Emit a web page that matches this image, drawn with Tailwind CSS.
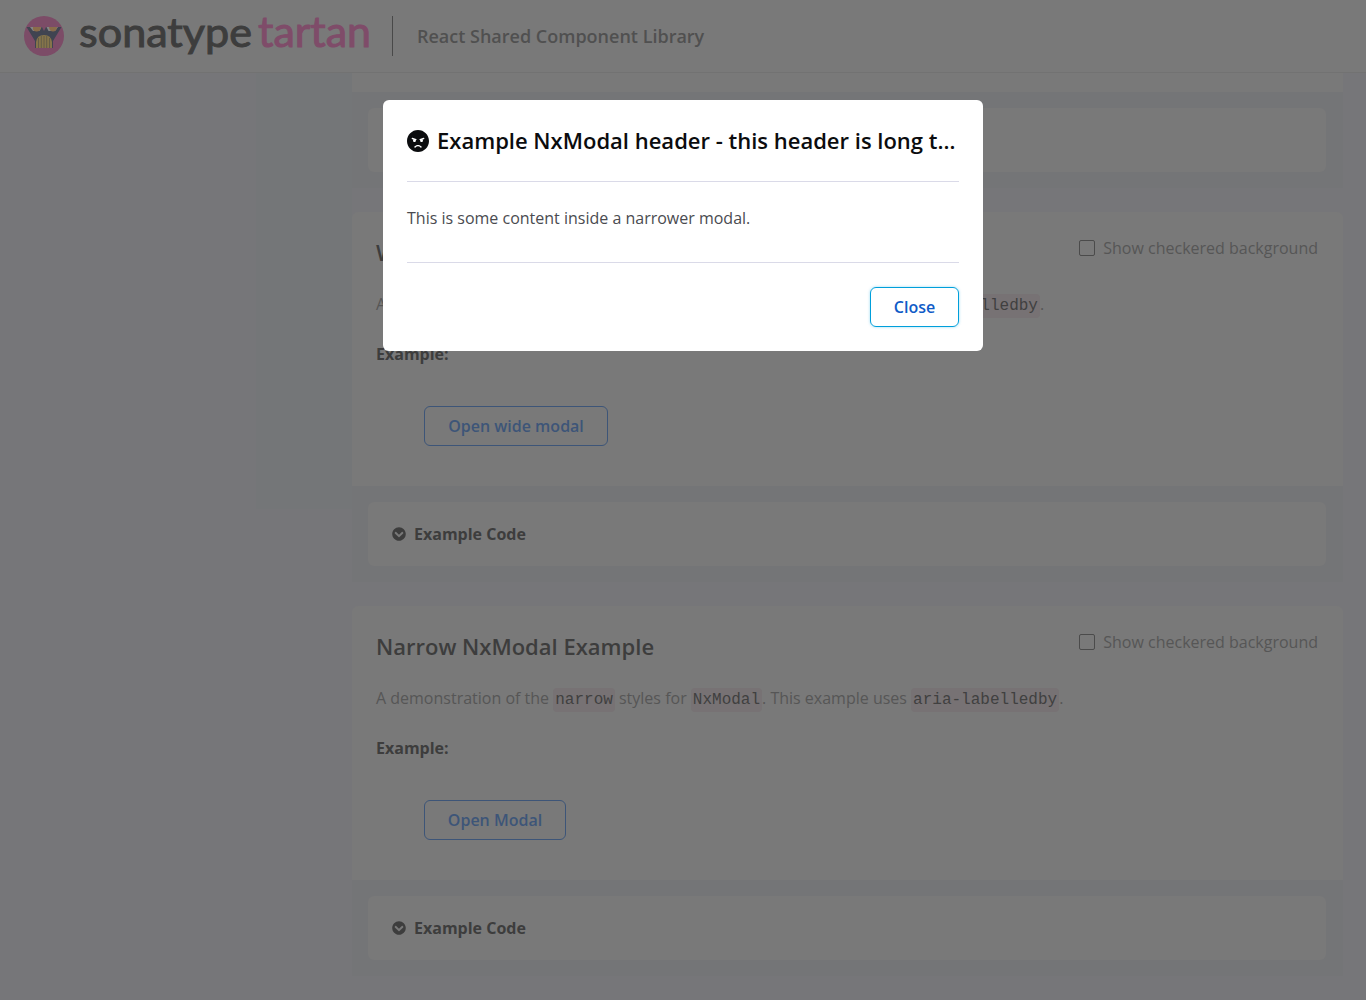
<!DOCTYPE html>
<html lang="en">
<head>
<meta charset="utf-8">
<title>React Shared Component Library</title>
<script src="https://cdn.jsdelivr.net/npm/@tailwindcss/browser@4"></script>
</head>
<body class="h-[1000px] overflow-hidden bg-[#767679] font-['Open_Sans',sans-serif] text-base text-[#565656]">
<div class="flex h-[1000px] flex-col overflow-hidden">
  <header class="flex h-[73px] shrink-0 items-start border-b border-[#727272] bg-[#797979] pt-4 pl-6">
    <svg class="h-10 w-10 shrink-0" viewBox="0 0 40 40">
      <circle cx="20" cy="20" r="20" fill="#7c4c67"/>
      <path d="M2.500 11H18l2 4 2-4h15.500L29 25v7H11v-7z" fill="#404451"/>
      <path d="M6 11h11.500l-2 4H9z" fill="#858585"/><path d="M34 11H22.500l2 4H31z" fill="#858585"/>
      <path d="M9 11h8c0 3-2 4.500-4.500 4.500-2 0-3-1-3.500-2z" fill="#8a6c4a"/><path d="M25 11h8c0 3-2 4.500-4 4.500s-4-1.500-4-4.500z" fill="#8a6c4a"/>
      <path d="M12 32v-6q1-7 8-7t8 7v6z" fill="#85744a"/>
      <path d="M14.500 22v10M17.300 20v12M20 20v12M22.700 20v12M25.500 22v10" stroke="#605a48" stroke-width=".9"/>
    </svg>
    <svg class="h-10 w-[304px] shrink-0" viewBox="64 16 304 40" overflow="visible">
      <text x="79" y="46.500" font-family="Lato" font-size="41.500" font-weight="400" fill="#3d3d3d" stroke="#3d3d3d" stroke-width="1" textLength="173" lengthAdjust="spacingAndGlyphs">sonatype</text>
      <text x="258" y="46.500" font-family="Lato" font-size="42" font-weight="400" fill="#7f4c69" stroke="#7f4c69" stroke-width="1" textLength="113" lengthAdjust="spacingAndGlyphs">tartan</text>
    </svg>
    <div class="ml-6 h-10 w-px bg-[#494949]"></div>
    <div class="ml-6 text-lg leading-10 font-semibold text-[#505050]">React Shared Component Library</div>
  </header>
  <div class="flex min-h-0 flex-1">
    <aside class="ml-64 h-[436px] w-24 shrink-0 bg-[#747678]"></aside>
    <main class="w-[991px] shrink-0">
      <div class="h-[19px] bg-[#797979]"></div>
      <div class="h-24 bg-[#747577] px-4 pt-4 pr-[17px]"><div class="h-16 rounded-md bg-[#797979]"></div></div>

      <section class="mt-6 h-[274px] rounded-t-md bg-[#797979] px-6 pt-6">
        <div class="flex justify-between">
          <h2 class="h-[33px] text-[22px] leading-8 font-semibold text-[#3d3d3d]">Wide NxModal Example</h2>
          <label class="mr-px flex h-6 items-center gap-2"><span class="h-4 w-4 rounded-xs border border-[#4b4b4b]"></span>Show checkered background</label>
        </div>
        <p class="mt-[23px] h-6 leading-6 whitespace-nowrap">A demonstration of the <code class="rounded bg-[#777274] px-0.5 py-[3px] font-['Liberation_Mono',monospace] text-[#404040]">wide</code> styles for <code class="rounded bg-[#777274] px-0.5 py-[3px] font-['Liberation_Mono',monospace] text-[#404040]">NxModal</code>. This example uses <code class="rounded bg-[#777274] px-0.5 py-[3px] font-['Liberation_Mono',monospace] text-[#404040]">aria-labelledby</code>.</p>
        <p class="mt-[26px] leading-6 font-bold text-[#3d3d3d]">Example:</p>
        <button class="mt-10 ml-12 h-10 w-[184px] rounded-md border border-[#3d5578] font-semibold text-[#3d5578]">Open wide modal</button>
      </section>
      <div class="h-24 bg-[#747577] px-4 pt-4 pr-[17px]">
        <div class="flex h-16 items-center gap-2 rounded-md bg-[#797979] px-6 font-bold text-[#3d3d3d]">
          <svg class="h-3.5 w-3.5" viewBox="0 0 512 512" fill="currentColor"><path d="M504 256c0 137-111 248-248 248S8 393 8 256 119 8 256 8s248 111 248 248zM273 369.900l135.500-135.500c9.400-9.400 9.400-24.600 0-33.900l-17-17c-9.400-9.400-24.600-9.400-33.900 0L256 285.100 154.400 183.500c-9.400-9.400-24.600-9.400-33.900 0l-17 17c-9.400 9.400-9.400 24.600 0 33.900L239 369.900c9.400 9.400 24.600 9.400 34 0z"/></svg>Example Code
        </div>
      </div>

      <section class="mt-6 h-[274px] rounded-t-md bg-[#797979] px-6 pt-6">
        <div class="flex justify-between">
          <h2 class="h-[33px] text-[22px] leading-8 font-semibold text-[#3d3d3d]">Narrow NxModal Example</h2>
          <label class="mr-px flex h-6 items-center gap-2"><span class="h-4 w-4 rounded-xs border border-[#4b4b4b]"></span>Show checkered background</label>
        </div>
        <p class="mt-[23px] h-6 leading-6 whitespace-nowrap">A demonstration of the <code class="rounded bg-[#777274] px-0.5 py-[3px] font-['Liberation_Mono',monospace] text-[#404040]">narrow</code> styles for <code class="rounded bg-[#777274] px-0.5 py-[3px] font-['Liberation_Mono',monospace] text-[#404040]">NxModal</code>. This example uses <code class="rounded bg-[#777274] px-0.5 py-[3px] font-['Liberation_Mono',monospace] text-[#404040]">aria-labelledby</code>.</p>
        <p class="mt-[26px] leading-6 font-bold text-[#3d3d3d]">Example:</p>
        <button class="mt-10 ml-12 h-10 w-[142px] rounded-md border border-[#3d5578] font-semibold text-[#3d5578]">Open Modal</button>
      </section>
      <div class="h-24 bg-[#747577] px-4 pt-4 pr-[17px]">
        <div class="flex h-16 items-center gap-2 rounded-md bg-[#797979] px-6 font-bold text-[#3d3d3d]">
          <svg class="h-3.5 w-3.5" viewBox="0 0 512 512" fill="currentColor"><path d="M504 256c0 137-111 248-248 248S8 393 8 256 119 8 256 8s248 111 248 248zM273 369.900l135.500-135.500c9.400-9.400 9.400-24.600 0-33.900l-17-17c-9.400-9.400-24.600-9.400-33.900 0L256 285.100 154.400 183.500c-9.400-9.400-24.600-9.400-33.900 0l-17 17c-9.400 9.400-9.400 24.600 0 33.900L239 369.900c9.400 9.400 24.600 9.400 34 0z"/></svg>Example Code
        </div>
      </div>
    </main>
  </div>
</div>

<div role="dialog" class="absolute top-[100px] left-[383px] h-[251px] w-[600px] rounded-md bg-white px-6">
  <header class="flex h-[82px] items-center gap-2 border-b border-[#dadae8] text-[#0b0c0e]">
    <svg class="h-[22px] w-[22px] shrink-0" viewBox="0 0 496 496" fill="currentColor"><path d="M248 0C111 0 0 111 0 248s111 248 248 248 248-111 248-248S385 0 248 0zM136 240c0-9.300 4.100-17.500 10.500-23.400l-31-9.300c-8.500-2.500-13.300-11.500-10.700-19.900 2.500-8.500 11.400-13.200 19.900-10.700l80 24c8.500 2.500 13.300 11.500 10.700 19.900-2.100 6.900-8.400 11.400-15.300 11.400-.5 0-1.100-.2-1.700-.2.700 2.700 1.700 5.300 1.700 8.200 0 17.700-14.300 32-32 32S136 257.700 136 240zm168 154.200c-27.800-33.400-84.200-33.400-112.100 0-13.500 16.300-38.200-4.200-24.600-20.500 20-24 49.400-37.700 80.600-37.700s60.600 13.800 80.600 37.700c13.800 16.500-11.100 36.600-24.500 20.500zm76.600-186.900l-31 9.300c6.300 5.800 10.500 14.100 10.500 23.400 0 17.700-14.300 32-32 32s-32-14.300-32-32c0-2.900.9-5.600 1.700-8.200-.6.100-1.100.2-1.700.2-6.900 0-13.200-4.500-15.300-11.400-2.500-8.500 2.300-17.400 10.700-19.900l80-24c8.400-2.500 17.400 2.300 19.900 10.700 2.500 8.500-2.300 17.400-10.800 19.900z"/></svg>
    <h2 class="truncate pb-0.5 text-[22px] leading-8 font-semibold">Example NxModal header - this header is long to demonstrate truncation</h2>
  </header>
  <div class="h-[81px] border-b border-[#dadae8] pt-6 leading-6 text-[#4a4b50]">This is some content inside a narrower modal.</div>
  <footer class="flex justify-end pt-6"><button class="h-10 w-[89px] rounded-md border border-[#009fdb] font-semibold text-[#0f5bc7] shadow-[0_0_3px_#00a3e066]">Close</button></footer>
</div>
</body>
</html>
